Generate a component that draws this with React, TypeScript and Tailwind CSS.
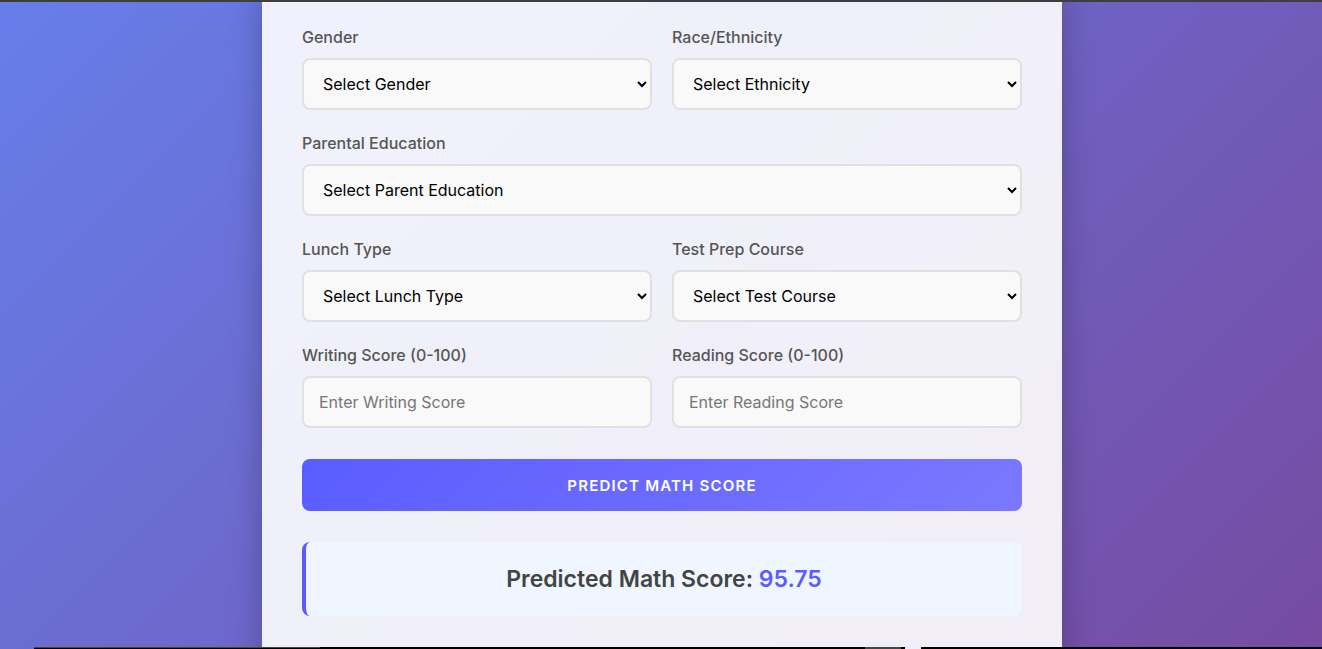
import React from "react";

const font = { fontFamily: "Inter, 'Noto Sans', sans-serif" };

function Label({ children }: { children: React.ReactNode }) {
  return <label className="block mb-[10px] text-[16px] leading-[22px] font-medium text-[#555]">{children}</label>;
}

function Sel({ text }: { text: string }) {
  return (
    <select
      className="w-full h-[52px] px-[15px] text-base text-black bg-[#f9f9f9] border-2 border-[#e1e1e1] rounded-lg outline-none"
      defaultValue=""
      style={font}
    >
      <option value="">{text}</option>
    </select>
  );
}

function Inp({ text }: { text: string }) {
  return (
    <input
      className="w-full h-[52px] px-[15px] text-base text-black bg-[#f9f9f9] border-2 border-[#e1e1e1] rounded-lg outline-none placeholder:text-[#777]"
      placeholder={text}
      style={font}
    />
  );
}

export default function App() {
  return (
    <div
      className="relative h-[649px] w-[1322px] overflow-hidden bg-[linear-gradient(135deg,#667eea_0%,#764ba2_100%)]"
      style={font}
    >
      <div className="absolute top-0 left-0 right-0 h-[2px] bg-[#3e3e3e] z-10" />
      <div className="ml-[262px] w-[800px] mt-[-14px] bg-white/90 shadow-[0_10px_30px_rgba(0,0,0,0.25)] px-10 pt-10 pb-10">
        <div className="grid grid-cols-2 gap-x-[20px]">
          <div className="mb-[22px]">
            <Label>Gender</Label>
            <Sel text="Select Gender" />
          </div>
          <div className="mb-[22px]">
            <Label>Race/Ethnicity</Label>
            <Sel text="Select Ethnicity" />
          </div>
          <div className="mb-[22px] col-span-2">
            <Label>Parental Education</Label>
            <Sel text="Select Parent Education" />
          </div>
          <div className="mb-[22px]">
            <Label>Lunch Type</Label>
            <Sel text="Select Lunch Type" />
          </div>
          <div className="mb-[22px]">
            <Label>Test Prep Course</Label>
            <Sel text="Select Test Course" />
          </div>
          <div className="mb-[22px]">
            <Label>Writing Score (0-100)</Label>
            <Inp text="Enter Writing Score" />
          </div>
          <div className="mb-[22px]">
            <Label>Reading Score (0-100)</Label>
            <Inp text="Enter Reading Score" />
          </div>
        </div>
        <button className="mt-[9px] w-full h-[52px] pt-[2px] rounded-lg bg-[linear-gradient(135deg,#5b5cff_0%,#7b78ff_100%)] text-white text-[15px] font-semibold tracking-[1.2px] uppercase">
          Predict Math Score
        </button>
        <div className="mt-[31px] h-[74px] rounded-lg bg-[#eff6ff] border-l-4 border-[#5b5cff] flex items-center justify-center">
          <span className="text-[23px] font-semibold text-[#444]">
            Predicted Math Score: <span className="text-[#5b5cff]">95.75</span>
          </span>
        </div>
      </div>
      <div className="absolute bottom-0 left-[34px] right-0 h-[2px] bg-black z-10">
        <div className="absolute top-0 left-0 w-[286px] h-[1px] bg-[#444]" />
        <div className="absolute top-0 left-[831px] w-[36px] h-[2px] bg-[#444]" />
        <div className="absolute top-0 left-[871px] w-[16px] h-[2px] bg-[#f0eef8]" />
      </div>
    </div>
  );
}
